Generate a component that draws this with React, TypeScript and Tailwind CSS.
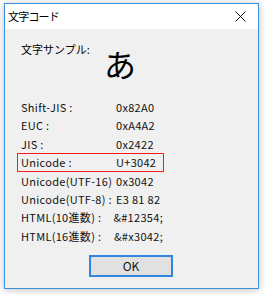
import React from 'react';

interface CodeRow {
    label: string;
    value: string;
    marked?: boolean;
}

const rows: CodeRow[] = [
    { label: 'Shift-JIS :', value: '0x82A0' },
    { label: 'EUC :', value: '0xA4A2' },
    { label: 'JIS :', value: '0x2422' },
    { label: 'Unicode :', value: 'U+3042', marked: true },
    { label: 'Unicode(UTF-16)', value: '0x3042' },
    { label: 'Unicode(UTF-8) :', value: 'E3 81 82' },
    { label: 'HTML(10進数) :', value: '&#12354;' },
    { label: 'HTML(16進数) :', value: '&#x3042;' },
];

const font = { fontFamily: '"Noto Sans CJK JP", "Noto Sans", sans-serif' };

const App: React.FC = () => {
    return (
        <div className="w-[265px] h-[294px] bg-white pt-[3px] pl-[4px]" style={font}>
            <div className="w-[255px] h-[286px] flex flex-col border border-[#3a8fe0] bg-[#f0f0f0] shadow-[0_1px_8px_rgba(0,0,0,0.25)]">
                {/* title bar */}
                <div className="h-[25px] shrink-0 bg-white flex items-center justify-between pl-[3px] pr-[12px]">
                    <span className="text-[11px] tracking-[-0.8px] text-black">文字コード</span>
                    <svg width="11" height="11" viewBox="0 0 11 11">
                        <path d="M0.5 0.5 L10.5 10.5 M10.5 0.5 L0.5 10.5" stroke="#111" strokeWidth="1" />
                    </svg>
                </div>

                <div className="flex flex-col pl-[12px]">
                    <div className="flex items-start pl-[4px] mt-[15px] h-[35px]">
                        <span className="w-[83px] text-[11px] leading-none text-black">文字サンプル:</span>
                        <span className="mt-[3px] text-[32px] leading-none text-black">あ</span>
                    </div>

                    <div className="flex flex-col mt-[19px]">
                        {rows.map((r) => (
                            <div
                                key={r.label}
                                className={r.marked
                                    ? 'w-[147px] h-[18.4px] flex items-center pl-[3px] border border-[#ff1a1a]'
                                    : 'w-[147px] h-[18.4px] flex items-center pl-[3px] border border-transparent'}
                            >
                                <span className="w-[95px] text-[11px] tracking-[0.3px] text-[#111] whitespace-nowrap">{r.label}</span>
                                <span className="text-[11px] tracking-[0.3px] text-[#111] whitespace-nowrap">{r.value}</span>
                            </div>
                        ))}
                    </div>
                </div>

                <div className="flex justify-center mt-[10px] pr-[1px]">
                    <button className="w-[84px] h-[22px] border-2 border-[#2f86dc] bg-[#e1e1e1] text-[12px] text-[#111] flex items-center justify-center">
                        OK
                    </button>
                </div>
            </div>
        </div>
    );
};

export default App;
